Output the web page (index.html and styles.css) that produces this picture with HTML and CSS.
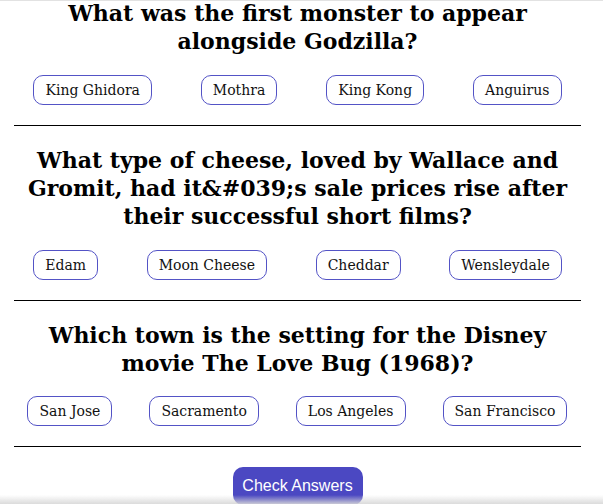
FILE: index.html
```html
<!DOCTYPE html>
<html>
<head>
<meta charset="utf-8">
<link rel="stylesheet" href="styles.css">
</head>
<body>
<main class="quiz">
  <section class="question">
    <h2 class="question-title">What was the first monster to appear alongside Godzilla?</h2>
    <div class="answers">
      <button class="answer">King Ghidora</button>
      <button class="answer">Mothra</button>
      <button class="answer">King Kong</button>
      <button class="answer">Anguirus</button>
    </div>
    <hr class="divider">
  </section>
  <section class="question">
    <h2 class="question-title">What type of cheese, loved by Wallace and Gromit, had it&amp;#039;s sale prices rise after their successful short films?</h2>
    <div class="answers">
      <button class="answer">Edam</button>
      <button class="answer">Moon Cheese</button>
      <button class="answer">Cheddar</button>
      <button class="answer">Wensleydale</button>
    </div>
    <hr class="divider">
  </section>
  <section class="question">
    <h2 class="question-title">Which town is the setting for the Disney movie The Love Bug (1968)?</h2>
    <div class="answers">
      <button class="answer">San Jose</button>
      <button class="answer">Sacramento</button>
      <button class="answer">Los Angeles</button>
      <button class="answer">San Francisco</button>
    </div>
    <hr class="divider">
  </section>
  <div class="actions">
    <button class="check-btn">Check Answers</button>
  </div>
</main>
<div class="top-edge"></div>
<div class="bottom-shade"></div>
</body>
</html>
```
FILE: styles.css
```css
* { box-sizing: border-box; }
html, body { margin: 0; padding: 0; background: #fff; }
body { width: 595px; overflow: hidden; height: 504px; }

.quiz {
  margin: -1px 9px 0;
}

.question {
  display: flex;
  flex-direction: column;
}

.question-title {
  margin: 0;
  padding: 0 12px;
  font-family: "DejaVu Serif", serif;
  font-weight: bold;
  font-size: 22px;
  line-height: 28px;
  text-align: center;
  color: #000;
}

.question + .question .question-title {
  padding-top: 20px;
}

.question:last-of-type .answers {
  margin-top: 19px;
}

.answers {
  display: flex;
  justify-content: space-around;
  margin-top: 20px;
}

.answer {
  font-family: "DejaVu Serif", serif;
  font-size: 14px;
  color: #111;
  background: #fff;
  border: 1px solid #5353c6;
  border-radius: 10px;
  height: 30px;
  padding: 0 11px;
  cursor: pointer;
}

.divider {
  margin: 20px 5px 0;
  border: 0;
  border-top: 1px solid #000;
  height: 0;
}

.actions {
  display: flex;
  justify-content: center;
  margin-top: 20px;
}

.check-btn {
  font-family: "Liberation Sans", Arial, sans-serif;
  font-size: 16px;
  color: #fff;
  background: #4b48c2;
  border: 0;
  border-radius: 10px;
  width: 130px;
  height: 38px;
  padding: 0;
}

.top-edge {
  position: fixed;
  top: 0; left: 0; right: 0;
  height: 1px;
  background: #e2e2e2;
}

.bottom-shade {
  position: fixed;
  left: 0; right: 0; bottom: 0;
  height: 9px;
  background: linear-gradient(to bottom, rgba(230,230,230,0), rgba(215,215,215,0.9));
}
```
